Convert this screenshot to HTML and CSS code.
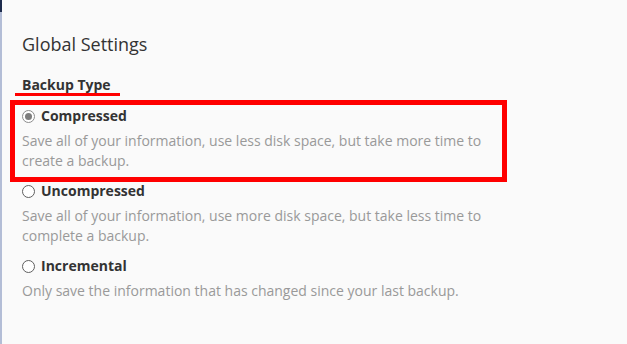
FILE: index.html
```html
<!DOCTYPE html>
<html lang="en">
<head>
<meta charset="utf-8">
<title>Global Settings</title>
<link rel="stylesheet" href="styles.css">
</head>
<body>
<div class="layout">
  <div class="edge"><div class="edge-top"></div></div>
  <main class="content">
    <h1 class="title">Global Settings</h1>
    <div class="field">
      <div class="field-label"><span class="label-text">Backup Type</span></div>
      <div class="options">
        <div class="option option-marked">
          <label class="option-head"><span class="radio radio-checked"></span><span class="option-name">Compressed</span></label>
          <p class="option-desc">Save all of your information, use less disk space, but take more time to create a backup.</p>
        </div>
        <div class="option">
          <label class="option-head"><span class="radio"></span><span class="option-name">Uncompressed</span></label>
          <p class="option-desc">Save all of your information, use more disk space, but take less time to complete a backup.</p>
        </div>
        <div class="option">
          <label class="option-head"><span class="radio"></span><span class="option-name">Incremental</span></label>
          <p class="option-desc">Only save the information that has changed since your last backup.</p>
        </div>
      </div>
    </div>
  </main>
</div>
</body>
</html>
```

FILE: styles.css
```css
html, body {
  margin: 0;
  padding: 0;
  height: 100%;
}
body {
  background: #fafafa;
  font-family: "Open Sans", "Noto Sans", sans-serif;
  color: #333;
}
.layout {
  display: flex;
  min-height: 100%;
}
.edge {
  width: 2px;
  flex: 0 0 2px;
  background: #b3bdd6;
}
.edge-top {
  height: 12px;
  background: #1d2b4c;
}
.content {
  flex: 1;
  padding: 32px 0 0 20px;
}
.title {
  margin: 0;
  font-size: 18px;
  line-height: 25px;
  font-weight: 400;
  color: #333;
}
.field {
  margin-top: 18px;
}
.field-label {
  font-size: 14px;
  line-height: 20px;
  font-weight: 700;
  color: #333;
}
.label-text {
  position: relative;
}
.label-text::after {
  content: "";
  position: absolute;
  left: -7px;
  top: 18px;
  width: 105px;
  height: 3px;
  background: #ff0000;
}
.options {
  margin-top: 11px;
  width: 470px;
}
.option {
  margin-bottom: 10px;
}
.option-marked {
  position: relative;
}
.option-marked::before {
  content: "";
  position: absolute;
  left: -12px;
  top: -6px;
  width: 487px;
  height: 72px;
  border: 5px solid #ff0000;
}
.option-head {
  display: flex;
  align-items: center;
  gap: 6px;
  font-size: 14px;
  line-height: 20px;
  font-weight: 700;
  color: #333;
}
.radio {
  width: 13px;
  height: 13px;
  box-sizing: border-box;
  border: 1px solid #5f5f5f;
  border-radius: 50%;
  background: #fff;
  position: relative;
  flex: 0 0 13px;
}
.radio-checked {
  border-color: #8c8c8c;
}
.radio-checked::after {
  content: "";
  position: absolute;
  left: 2px;
  top: 2px;
  width: 7px;
  height: 7px;
  border-radius: 50%;
  background: #7d7d7d;
}
.option-desc {
  margin: 5px 0 0;
  font-size: 14px;
  line-height: 20px;
  color: #999;
}
```
